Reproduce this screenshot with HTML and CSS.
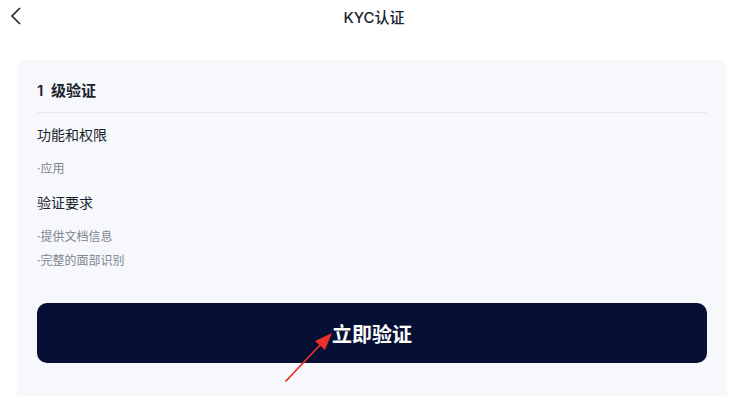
FILE: index.html
```html
<!DOCTYPE html>
<html lang="zh-CN">
<head>
<meta charset="utf-8">
<title>KYC认证</title>
<link rel="stylesheet" href="styles.css">
</head>
<body>
<div class="page">
  <header class="topbar">
    <button class="back" aria-label="返回">
      <svg width="12" height="18" viewBox="0 0 12 18"><polyline points="10,1 2,9 10,17" fill="none" stroke="#1b1f2e" stroke-width="1.6" stroke-linejoin="miter"/></svg>
    </button>
    <h1 class="title">KYC认证</h1>
  </header>
  <section class="card">
    <h2 class="level">1 级验证</h2>
    <div class="body">
      <h3 class="sub">功能和权限</h3>
      <ul class="list">
        <li>·应用</li>
      </ul>
      <h3 class="sub">验证要求</h3>
      <ul class="list">
        <li>·提供文档信息</li>
        <li>·完整的面部识别</li>
      </ul>
      <button class="verify">立即验证</button>
    </div>
  </section>
  <svg class="annot" width="746" height="396" viewBox="0 0 746 396">
    <line x1="286" y1="381" x2="321" y2="344" stroke="#e8302a" stroke-width="1.8" stroke-linecap="round"/>
    <polygon points="332,333 315,341 325,350" fill="#e8302a"/>
  </svg>
</div>
</body>
</html>
```
FILE: styles.css
```css
* { box-sizing: border-box; }
html, body { margin: 0; padding: 0; background: #ffffff; }
body {
  font-family: "Inter", "Noto Sans CJK SC", sans-serif;
  color: #1b1f2e;
  width: 746px;
  height: 396px;
  overflow: hidden;
}
.page { position: relative; width: 746px; height: 396px; }
.topbar {
  height: 36px;
  display: flex;
  align-items: center;
  justify-content: center;
  position: relative;
}
.back {
  position: absolute;
  left: 10px;
  top: 7px;
  border: 0;
  background: none;
  padding: 0;
  width: 12px;
  height: 18px;
}
.back svg { display: block; }
.title {
  margin: 0;
  font-size: 15px;
  font-weight: 500;
  line-height: 20px;
  color: #1b1f2e;
  padding-left: 2px;
}
.card {
  margin: 24px 19px 0 17px;
  background: #f7f8fc;
  border-radius: 8px 8px 0 0;
  padding: 20px 20px 0 20px;
  height: 336px;
}
.level {
  margin: 0;
  font-size: 15px;
  font-weight: 600;
  line-height: 22px;
  word-spacing: 4px;
  padding-bottom: 10px;
  border-bottom: 1px solid #e6e8ee;
  color: #1b1f2e;
}
.body { display: flex; flex-direction: column; padding-top: 11px; }
.sub {
  margin: 0;
  font-size: 14px;
  font-weight: 400;
  line-height: 22px;
  color: #1b1f2e;
}
.list {
  list-style: none;
  margin: 13px 0 13px 0;
  padding: 0;
  display: flex;
  flex-direction: column;
  gap: 4px;
}
.list li {
  font-size: 12px;
  line-height: 20px;
  color: #80858f;
}
.list:last-of-type { margin-bottom: 0; }
.verify {
  margin-top: 32px;
  height: 60px;
  width: 100%;
  border: 0;
  border-radius: 10px;
  background: #061035;
  color: #ffffff;
  font-family: "Inter", "Noto Sans CJK SC", sans-serif;
  font-size: 20px;
  font-weight: 700;
  padding: 0;
}
.annot { position: absolute; left: 0; top: 0; pointer-events: none; }
```
